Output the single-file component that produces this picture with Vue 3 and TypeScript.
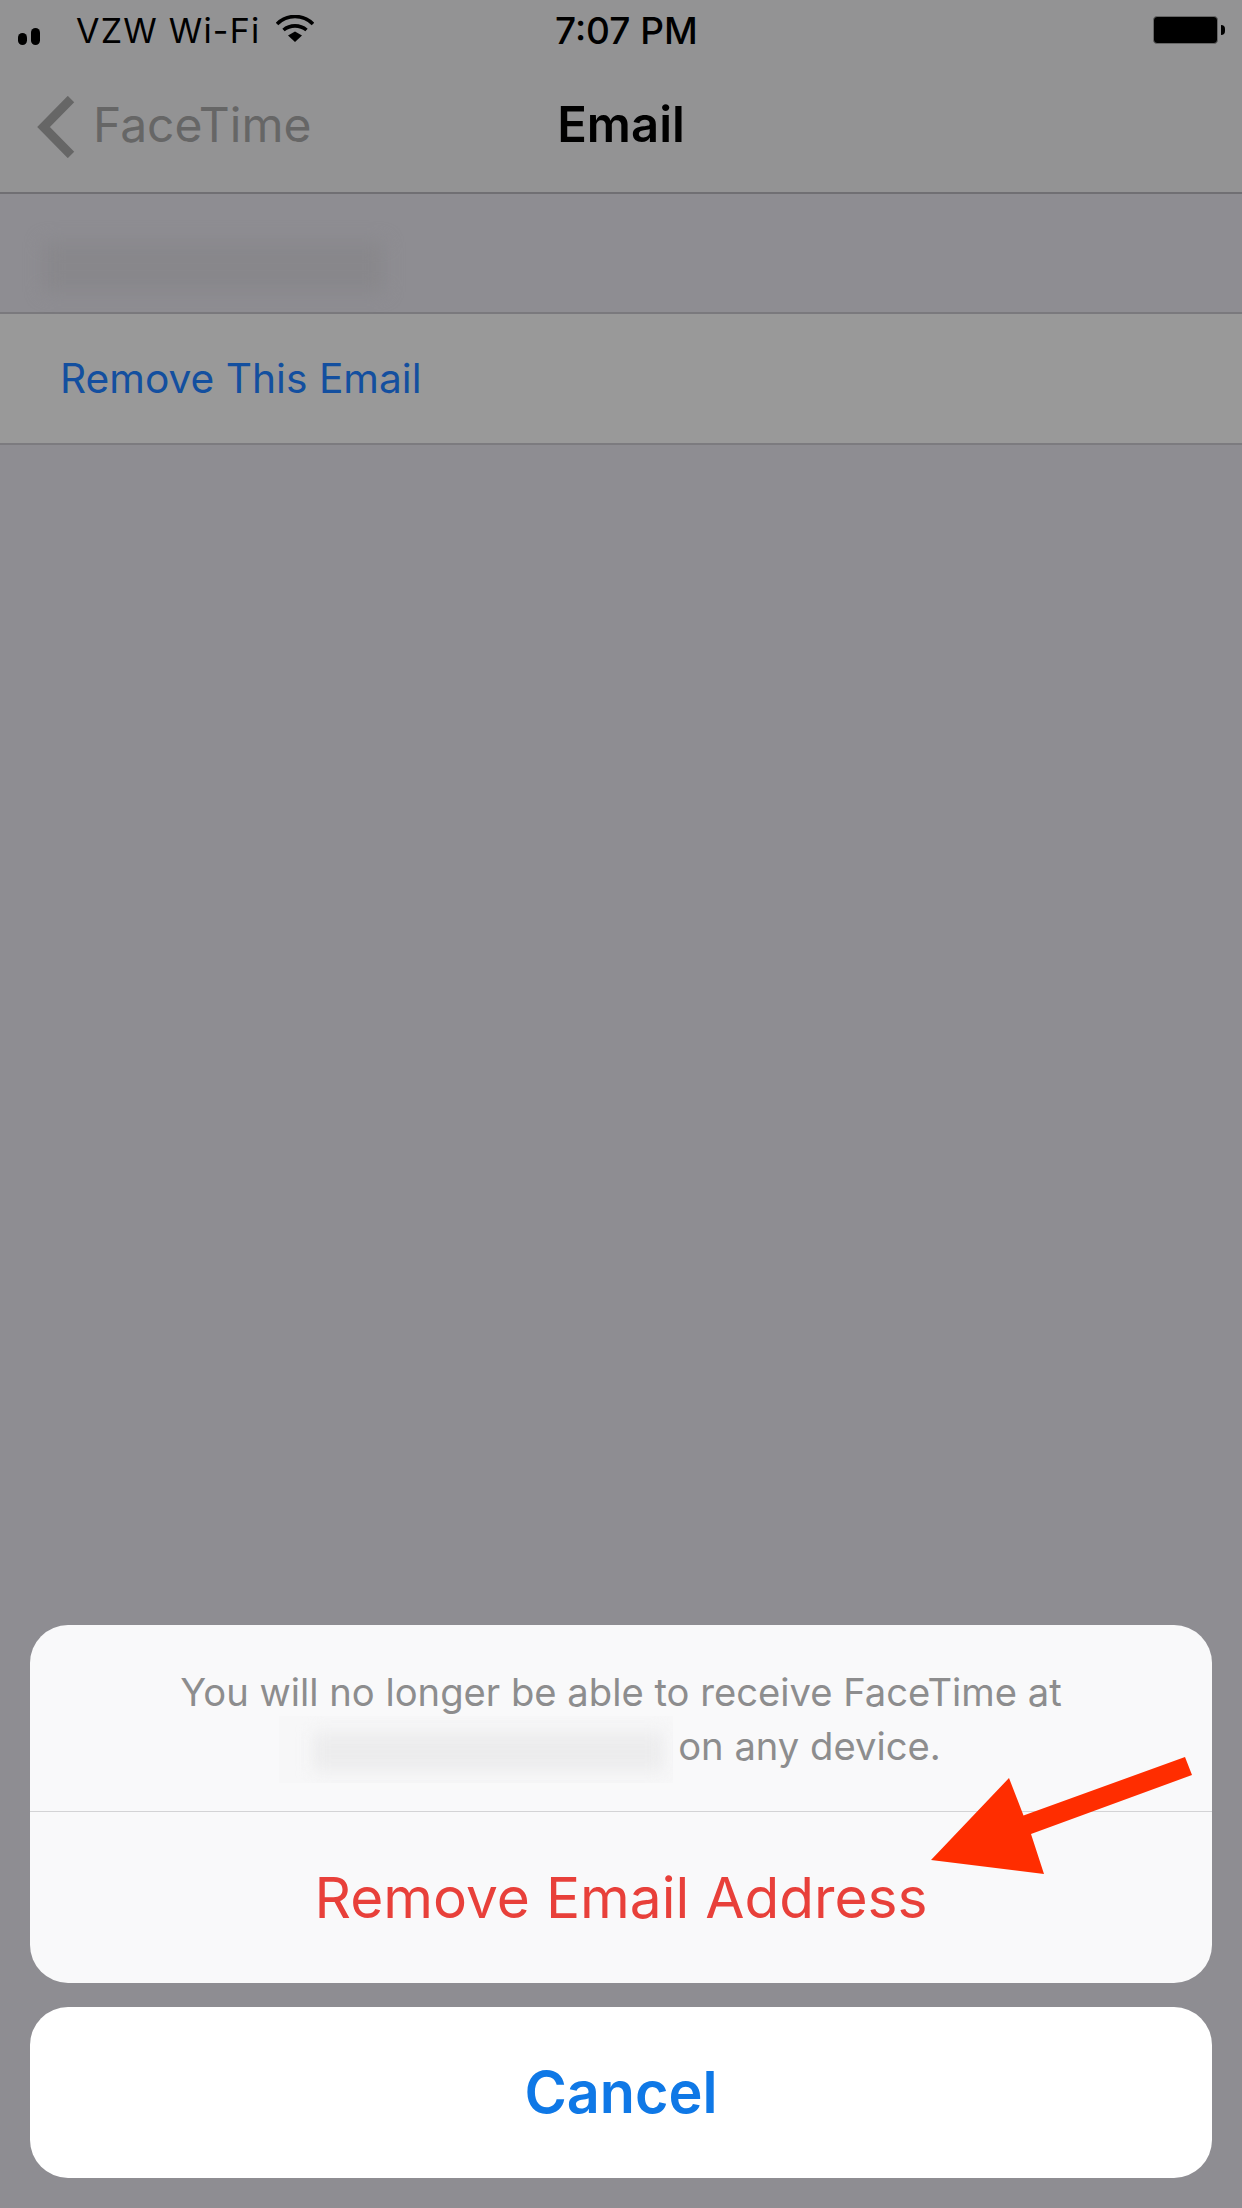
<script setup lang="ts">
const arrowPoints = '254,0 261,18 100,77 113,117 0,103 78,21 92.5,58.5'
</script>

<template>
  <div class="page">
    <header class="top">
      <div class="status">
        <div class="status-left">
          <svg class="signal" width="22" height="17" viewBox="0 0 22 17">
            <rect x="0" y="5" width="9" height="12" rx="4.5" fill="#000" />
            <rect x="13" y="0" width="9" height="17" rx="4.5" fill="#000" />
          </svg>
          <span class="carrier">VZW Wi-Fi</span>
          <svg class="wifi" width="38" height="27" viewBox="0 0 38 27">
            <path d="M1 9C11 -1 27 -1 37 9" fill="none" stroke="#000" stroke-width="3.6" />
            <path d="M7.5 15C14 9.5 24 9.5 30.5 15" fill="none" stroke="#000" stroke-width="3.6" />
            <path d="M12 20.5L19 16.5L26 20.5L19 27Z" fill="#000" />
          </svg>
        </div>
        <span class="clock">7:07 PM</span>
        <div class="battery">
          <div class="battery-body"></div>
          <div class="battery-nub"></div>
        </div>
      </div>
      <nav class="nav">
        <div class="back">
          <svg class="chevron" width="38" height="62" viewBox="0 0 38 62">
            <path d="M34 3L6.5 31L34 59" fill="none" stroke="#666" stroke-width="9" />
          </svg>
          <span class="back-label">FaceTime</span>
        </div>
        <h1 class="title">Email</h1>
      </nav>
    </header>

    <section class="account-row">
      <div class="smudge"></div>
    </section>
    <section class="remove-row">
      <span class="remove-link">Remove This Email</span>
    </section>

    <div class="spacer"></div>

    <div class="sheet">
      <div class="actions">
        <div class="message">
          <p class="message-line">You will no longer be able to receive FaceTime at</p>
          <p class="message-line second">
            <span class="redacted"><span class="redacted-ink"></span></span>
            <span>on any device.</span>
          </p>
        </div>
        <div class="destructive">Remove Email Address</div>
      </div>
      <div class="cancel">Cancel</div>
      <svg class="arrow" width="262" height="118" viewBox="0 0 262 118">
        <polygon :points="arrowPoints" fill="#ff2d00" />
      </svg>
    </div>
  </div>
</template>

<style scoped>
.page {
  position: relative;
  display: flex;
  flex-direction: column;
  width: 1242px;
  height: 2208px;
  overflow: hidden;
  background: #8e8d92;
  font-family: Inter, Roboto, "Liberation Sans", sans-serif;
  color: #000;
}
.top {
  height: 194px;
  box-sizing: border-box;
  background: #939394;
  border-bottom: 2px solid #706f73;
}
.status {
  position: relative;
  display: flex;
  align-items: center;
  height: 62px;
  box-sizing: border-box;
  padding: 0 18px;
}
.status-left {
  display: flex;
  align-items: center;
}
.signal {
  margin-top: 10px;
}
.carrier {
  margin-left: 36px;
  font-size: 34px;
  letter-spacing: 1.2px;
  line-height: 62px;
}
.wifi {
  margin-left: 16px;
  margin-top: -5px;
}
.clock {
  position: absolute;
  left: 555px;
  top: 0;
  font-size: 37px;
  font-weight: 500;
  line-height: 62px;
}
.battery {
  position: absolute;
  left: 1153px;
  top: 16px;
  display: flex;
  align-items: center;
  gap: 3px;
}
.battery-body {
  width: 65px;
  height: 28px;
  box-sizing: border-box;
  background: #000;
  border: 1px solid #666;
  border-radius: 4px;
}
.battery-nub {
  width: 4px;
  height: 10px;
  background: #000;
  border-radius: 0 4px 4px 0;
}
.nav {
  position: relative;
  display: flex;
  align-items: center;
  height: 130px;
  box-sizing: border-box;
  padding-bottom: 5px;
}
.back {
  display: flex;
  align-items: center;
  margin-left: 37px;
}
.chevron {
  margin-top: 5px;
}
.back-label {
  margin-left: 18px;
  font-size: 48px;
  color: #666;
}
.title {
  position: absolute;
  left: 0;
  right: 0;
  margin: 0;
  text-align: center;
  font-size: 49px;
  font-weight: 600;
}
.account-row {
  position: relative;
  height: 118px;
  border-bottom: 2px solid #7a797d;
  background: #8e8d92;
}
.smudge {
  position: absolute;
  left: 44px;
  top: 48px;
  width: 340px;
  height: 50px;
  background: repeating-linear-gradient(90deg, #87868a 0 10px, #8a898d 10px 18px);
  filter: blur(9px);
}
.remove-row {
  display: flex;
  align-items: center;
  height: 129px;
  padding-left: 60px;
  background: #999;
  border-bottom: 2px solid #7c7b7f;
}
.remove-link {
  font-size: 40.7px;
  color: #134f9f;
}
.spacer {
  flex: 1;
}
.sheet {
  position: relative;
  display: flex;
  flex-direction: column;
  gap: 24px;
  margin: 0 30px 30px;
}
.actions {
  height: 358px;
  background: #f9f9fa;
  border-radius: 38px;
  overflow: hidden;
}
.message {
  height: 187px;
  box-sizing: border-box;
  padding-top: 40px;
  border-bottom: 1px solid #d3d3d5;
  color: #8d8d8e;
  font-size: 38.2px;
  text-align: center;
}
.message-line {
  margin: 0;
  height: 54px;
  line-height: 54px;
}
.second {
  display: flex;
  justify-content: center;
  gap: 5px;
  padding-right: 22px;
}
.redacted {
  position: relative;
  display: block;
  width: 394px;
  height: 67px;
  margin-top: -3px;
  overflow: hidden;
  background: #f7f7f8;
}
.redacted-ink {
  position: absolute;
  left: 34px;
  right: 10px;
  top: 16px;
  bottom: 12px;
  background: #ececed;
  filter: blur(8px);
}
.destructive {
  height: 171px;
  line-height: 171px;
  text-align: center;
  color: #e8403a;
  font-size: 56.8px;
}
.cancel {
  height: 171px;
  line-height: 171px;
  text-align: center;
  color: #0f78e6;
  font-size: 57.5px;
  font-weight: 600;
  background: #fff;
  border-radius: 38px;
}
.arrow {
  position: absolute;
  left: 901px;
  top: 132px;
}
</style>
<style>
html, body { margin: 0; padding: 0; }
</style>
